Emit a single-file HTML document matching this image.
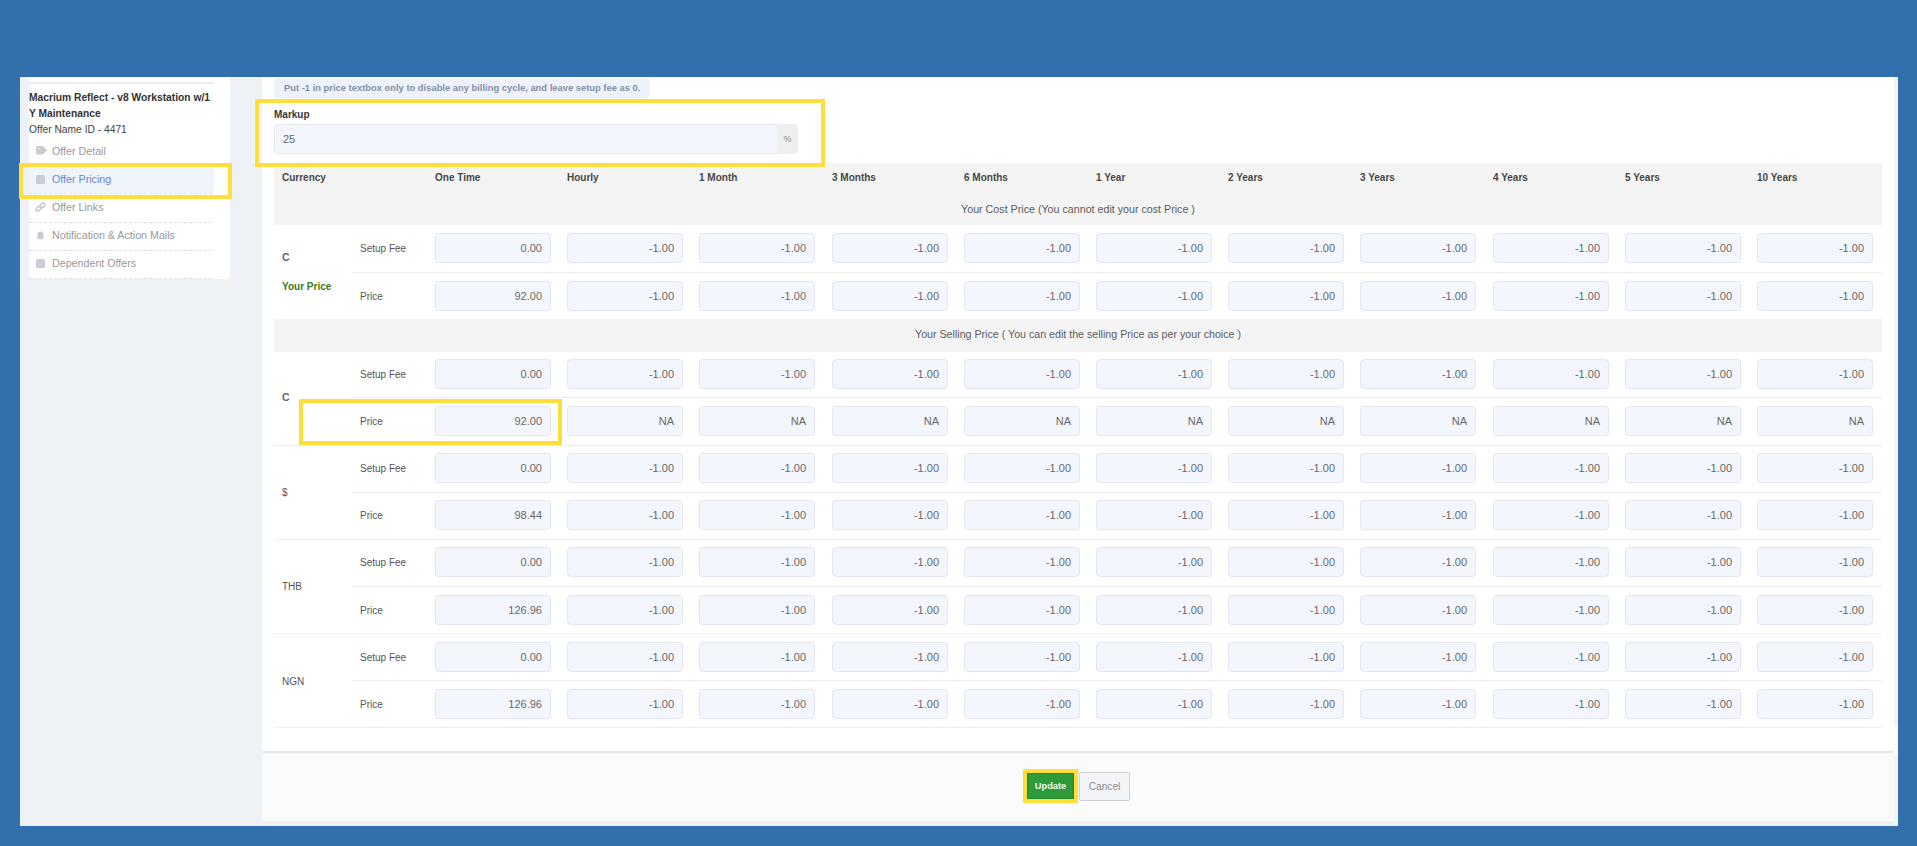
<!DOCTYPE html>
<html><head><meta charset="utf-8">
<style>
*{box-sizing:border-box;margin:0;padding:0}
html,body{width:1917px;height:846px;overflow:hidden;background:#3170ad;font-family:"Liberation Sans",sans-serif}
.abs{position:absolute}
#frame{position:absolute;left:20px;top:77px;width:1878px;height:749px;background:#eef1f6}
#card{position:absolute;left:29px;top:77px;width:201px;height:202px;background:#fff;border-radius:0 0 4px 4px}
#main{position:absolute;left:262px;top:77px;width:1632px;height:745px;background:#fff}
#footer{position:absolute;left:262px;top:751px;width:1632px;height:70px;background:#fbfbfb;border-top:2px solid #e5e5e5}
.th{position:absolute;font-size:10px;font-weight:bold;color:#474747;white-space:nowrap;line-height:12px}
.lab{position:absolute;font-size:10px;color:#555;white-space:nowrap;line-height:16px}
.cur{position:absolute;font-size:10px;color:#555;white-space:nowrap;line-height:16px}
.yp{position:absolute;font-size:10px;font-weight:bold;color:#3a7a1a;white-space:nowrap;line-height:16px}
.in{position:absolute;width:116px;height:30px;background:#f3f6fc;border:1px solid #e3e6f0;border-radius:4px;font-size:11px;color:#686868;text-align:right;padding-right:8px;line-height:29px;white-space:nowrap}
.ln{position:absolute;height:1px;background:#eeeeee}
.band{position:absolute;left:274px;width:1608px;background:#f4f4f4}
.bt{position:absolute;left:274px;width:1608px;text-align:center;font-size:10.7px;color:#5c5c5c;white-space:nowrap}
.ybox{position:absolute;border:4px solid #ffde3a}
.side{position:absolute;left:29px;width:185px;height:28px;font-size:10.7px;color:#999;line-height:28px;padding-left:23px;white-space:nowrap}
.dash{position:absolute;left:29px;width:185px;height:1px;background:repeating-linear-gradient(90deg,#e0e0e0 0 3px,transparent 3px 5px)}
</style></head><body>
<div id="frame"></div>
<div id="card"></div>
<div class="abs" style="left:29px;top:82px;width:185px;height:2px;background:#ededed"></div>
<div class="abs" style="left:29px;top:90px;width:190px;font-size:10.25px;font-weight:bold;color:#333;line-height:16px">Macrium Reflect - v8 Workstation w/1 Y Maintenance</div>
<div class="abs" style="left:29px;top:122px;font-size:10.25px;color:#444;line-height:16px;white-space:nowrap">Offer Name ID - 4471</div>
<div class="side" style="top:137px">Offer Detail</div>
<svg class="abs" style="left:35px;top:145px" width="13" height="11" viewBox="0 0 13 11"><path d="M1 2.5 Q1 1 2.5 1 L8 1 L12 5.2 L8 9.6 L2.5 9.6 Q1 9.6 1 8 Z" fill="#cbccd1"/><circle cx="3.4" cy="3.4" r="0.9" fill="#eee"/></svg>
<div class="side" style="top:165px;background:#f0f4fb;color:#6a84d6">Offer Pricing</div>
<div class="abs" style="left:36px;top:175px;width:9px;height:9px;background:#cbcdd8;border-radius:1.5px"></div>
<div class="dash" style="top:193px"></div>
<div class="side" style="top:193px">Offer Links</div>
<svg class="abs" style="left:35px;top:202px" width="11" height="11" viewBox="0 0 11 11"><g fill="none" stroke="#c8c9ce" stroke-width="1.6"><rect x="1" y="5" width="5" height="3.4" rx="1.7" transform="rotate(-45 3.5 6.7)"/><rect x="5" y="1.6" width="5" height="3.4" rx="1.7" transform="rotate(-45 7.5 3.3)"/></g></svg>
<div class="dash" style="top:222px"></div>
<div class="side" style="top:221px">Notification &amp; Action Mails</div>
<svg class="abs" style="left:36px;top:231px" width="9" height="10" viewBox="0 0 9 10"><path d="M4.5 0.5 C2.3 0.5 1.6 2.3 1.6 4 L1.6 6.3 L0.4 7.8 L8.6 7.8 L7.4 6.3 L7.4 4 C7.4 2.3 6.7 0.5 4.5 0.5 Z M3.2 8.4 Q4.5 10.2 5.8 8.4 Z" fill="#c8c9d0"/></svg>
<div class="dash" style="top:250px"></div>
<div class="side" style="top:249px">Dependent Offers</div>
<div class="abs" style="left:36px;top:259px;width:9px;height:9px;background:#cbcdd8;border-radius:1.5px"></div>
<div class="dash" style="top:278px"></div>

<div id="main"></div>
<div class="abs" style="left:274px;top:78px;width:376px;height:20px;background:#eef2fb;border-radius:3px"></div>
<div class="abs" style="left:284px;top:82px;font-size:9.4px;font-weight:bold;color:#8290a6;white-space:nowrap;line-height:12px">Put -1 in price textbox only to disable any billing cycle, and leave setup fee as 0.</div>
<div class="abs" style="left:274px;top:108px;font-size:10px;font-weight:bold;color:#383838;line-height:14px">Markup</div>
<div class="abs" style="left:274px;top:124px;width:524px;height:30px;background:#f3f6fc;border:1px solid #e5e8f1;border-radius:4px"></div>
<div class="abs" style="left:777px;top:124px;width:21px;height:30px;background:#efefef;border-radius:0 4px 4px 0;font-size:9px;color:#888;text-align:center;line-height:30px">%</div>
<div class="abs" style="left:283px;top:132px;font-size:11px;color:#666;line-height:14px">25</div>

<div class="band" style="top:163px;height:62px"></div>
<div class="bt" style="top:203px;line-height:13px">Your Cost Price (You cannot edit your cost Price )</div>
<div class="band" style="top:319px;height:33px"></div>
<div class="bt" style="top:328px;line-height:13px;font-size:10.66px">Your Selling Price ( You can edit the selling Price as per your choice )</div>
<div class="th" style="left:435px;top:172px">One Time</div>
<div class="th" style="left:567px;top:172px">Hourly</div>
<div class="th" style="left:699px;top:172px">1 Month</div>
<div class="th" style="left:832px;top:172px">3 Months</div>
<div class="th" style="left:964px;top:172px">6 Months</div>
<div class="th" style="left:1096px;top:172px">1 Year</div>
<div class="th" style="left:1228px;top:172px">2 Years</div>
<div class="th" style="left:1360px;top:172px">3 Years</div>
<div class="th" style="left:1493px;top:172px">4 Years</div>
<div class="th" style="left:1625px;top:172px">5 Years</div>
<div class="th" style="left:1757px;top:172px">10 Years</div>
<div class="th" style="left:282px;top:172px">Currency</div>
<div class="lab" style="left:360px;top:241px">Setup Fee</div>
<div class="in" style="left:435px;top:233px">0.00</div>
<div class="in" style="left:567px;top:233px">-1.00</div>
<div class="in" style="left:699px;top:233px">-1.00</div>
<div class="in" style="left:832px;top:233px">-1.00</div>
<div class="in" style="left:964px;top:233px">-1.00</div>
<div class="in" style="left:1096px;top:233px">-1.00</div>
<div class="in" style="left:1228px;top:233px">-1.00</div>
<div class="in" style="left:1360px;top:233px">-1.00</div>
<div class="in" style="left:1493px;top:233px">-1.00</div>
<div class="in" style="left:1625px;top:233px">-1.00</div>
<div class="in" style="left:1757px;top:233px">-1.00</div>
<div class="lab" style="left:360px;top:289px">Price</div>
<div class="in" style="left:435px;top:281px">92.00</div>
<div class="in" style="left:567px;top:281px">-1.00</div>
<div class="in" style="left:699px;top:281px">-1.00</div>
<div class="in" style="left:832px;top:281px">-1.00</div>
<div class="in" style="left:964px;top:281px">-1.00</div>
<div class="in" style="left:1096px;top:281px">-1.00</div>
<div class="in" style="left:1228px;top:281px">-1.00</div>
<div class="in" style="left:1360px;top:281px">-1.00</div>
<div class="in" style="left:1493px;top:281px">-1.00</div>
<div class="in" style="left:1625px;top:281px">-1.00</div>
<div class="in" style="left:1757px;top:281px">-1.00</div>
<div class="lab" style="left:360px;top:367px">Setup Fee</div>
<div class="in" style="left:435px;top:359px">0.00</div>
<div class="in" style="left:567px;top:359px">-1.00</div>
<div class="in" style="left:699px;top:359px">-1.00</div>
<div class="in" style="left:832px;top:359px">-1.00</div>
<div class="in" style="left:964px;top:359px">-1.00</div>
<div class="in" style="left:1096px;top:359px">-1.00</div>
<div class="in" style="left:1228px;top:359px">-1.00</div>
<div class="in" style="left:1360px;top:359px">-1.00</div>
<div class="in" style="left:1493px;top:359px">-1.00</div>
<div class="in" style="left:1625px;top:359px">-1.00</div>
<div class="in" style="left:1757px;top:359px">-1.00</div>
<div class="lab" style="left:360px;top:414px">Price</div>
<div class="in" style="left:435px;top:406px">92.00</div>
<div class="in" style="left:567px;top:406px">NA</div>
<div class="in" style="left:699px;top:406px">NA</div>
<div class="in" style="left:832px;top:406px">NA</div>
<div class="in" style="left:964px;top:406px">NA</div>
<div class="in" style="left:1096px;top:406px">NA</div>
<div class="in" style="left:1228px;top:406px">NA</div>
<div class="in" style="left:1360px;top:406px">NA</div>
<div class="in" style="left:1493px;top:406px">NA</div>
<div class="in" style="left:1625px;top:406px">NA</div>
<div class="in" style="left:1757px;top:406px">NA</div>
<div class="lab" style="left:360px;top:461px">Setup Fee</div>
<div class="in" style="left:435px;top:453px">0.00</div>
<div class="in" style="left:567px;top:453px">-1.00</div>
<div class="in" style="left:699px;top:453px">-1.00</div>
<div class="in" style="left:832px;top:453px">-1.00</div>
<div class="in" style="left:964px;top:453px">-1.00</div>
<div class="in" style="left:1096px;top:453px">-1.00</div>
<div class="in" style="left:1228px;top:453px">-1.00</div>
<div class="in" style="left:1360px;top:453px">-1.00</div>
<div class="in" style="left:1493px;top:453px">-1.00</div>
<div class="in" style="left:1625px;top:453px">-1.00</div>
<div class="in" style="left:1757px;top:453px">-1.00</div>
<div class="lab" style="left:360px;top:508px">Price</div>
<div class="in" style="left:435px;top:500px">98.44</div>
<div class="in" style="left:567px;top:500px">-1.00</div>
<div class="in" style="left:699px;top:500px">-1.00</div>
<div class="in" style="left:832px;top:500px">-1.00</div>
<div class="in" style="left:964px;top:500px">-1.00</div>
<div class="in" style="left:1096px;top:500px">-1.00</div>
<div class="in" style="left:1228px;top:500px">-1.00</div>
<div class="in" style="left:1360px;top:500px">-1.00</div>
<div class="in" style="left:1493px;top:500px">-1.00</div>
<div class="in" style="left:1625px;top:500px">-1.00</div>
<div class="in" style="left:1757px;top:500px">-1.00</div>
<div class="lab" style="left:360px;top:555px">Setup Fee</div>
<div class="in" style="left:435px;top:547px">0.00</div>
<div class="in" style="left:567px;top:547px">-1.00</div>
<div class="in" style="left:699px;top:547px">-1.00</div>
<div class="in" style="left:832px;top:547px">-1.00</div>
<div class="in" style="left:964px;top:547px">-1.00</div>
<div class="in" style="left:1096px;top:547px">-1.00</div>
<div class="in" style="left:1228px;top:547px">-1.00</div>
<div class="in" style="left:1360px;top:547px">-1.00</div>
<div class="in" style="left:1493px;top:547px">-1.00</div>
<div class="in" style="left:1625px;top:547px">-1.00</div>
<div class="in" style="left:1757px;top:547px">-1.00</div>
<div class="lab" style="left:360px;top:603px">Price</div>
<div class="in" style="left:435px;top:595px">126.96</div>
<div class="in" style="left:567px;top:595px">-1.00</div>
<div class="in" style="left:699px;top:595px">-1.00</div>
<div class="in" style="left:832px;top:595px">-1.00</div>
<div class="in" style="left:964px;top:595px">-1.00</div>
<div class="in" style="left:1096px;top:595px">-1.00</div>
<div class="in" style="left:1228px;top:595px">-1.00</div>
<div class="in" style="left:1360px;top:595px">-1.00</div>
<div class="in" style="left:1493px;top:595px">-1.00</div>
<div class="in" style="left:1625px;top:595px">-1.00</div>
<div class="in" style="left:1757px;top:595px">-1.00</div>
<div class="lab" style="left:360px;top:650px">Setup Fee</div>
<div class="in" style="left:435px;top:642px">0.00</div>
<div class="in" style="left:567px;top:642px">-1.00</div>
<div class="in" style="left:699px;top:642px">-1.00</div>
<div class="in" style="left:832px;top:642px">-1.00</div>
<div class="in" style="left:964px;top:642px">-1.00</div>
<div class="in" style="left:1096px;top:642px">-1.00</div>
<div class="in" style="left:1228px;top:642px">-1.00</div>
<div class="in" style="left:1360px;top:642px">-1.00</div>
<div class="in" style="left:1493px;top:642px">-1.00</div>
<div class="in" style="left:1625px;top:642px">-1.00</div>
<div class="in" style="left:1757px;top:642px">-1.00</div>
<div class="lab" style="left:360px;top:697px">Price</div>
<div class="in" style="left:435px;top:689px">126.96</div>
<div class="in" style="left:567px;top:689px">-1.00</div>
<div class="in" style="left:699px;top:689px">-1.00</div>
<div class="in" style="left:832px;top:689px">-1.00</div>
<div class="in" style="left:964px;top:689px">-1.00</div>
<div class="in" style="left:1096px;top:689px">-1.00</div>
<div class="in" style="left:1228px;top:689px">-1.00</div>
<div class="in" style="left:1360px;top:689px">-1.00</div>
<div class="in" style="left:1493px;top:689px">-1.00</div>
<div class="in" style="left:1625px;top:689px">-1.00</div>
<div class="in" style="left:1757px;top:689px">-1.00</div>
<div class="ln" style="left:352px;top:272px;width:1530px"></div>
<div class="ln" style="left:352px;top:397px;width:1530px"></div>
<div class="ln" style="left:274px;top:445px;width:1608px"></div>
<div class="ln" style="left:352px;top:492px;width:1530px"></div>
<div class="ln" style="left:274px;top:539px;width:1608px"></div>
<div class="ln" style="left:352px;top:586px;width:1530px"></div>
<div class="ln" style="left:274px;top:633px;width:1608px"></div>
<div class="ln" style="left:352px;top:680px;width:1530px"></div>
<div class="ln" style="left:274px;top:727px;width:1608px"></div>
<div class="cur" style="left:282px;top:249px;font-weight:bold;font-size:10.5px;color:#666">C</div>
<div class="cur" style="left:282px;top:389px;font-weight:bold;font-size:10.5px;color:#666">C</div>
<div class="cur" style="left:282px;top:485px">$</div>
<div class="cur" style="left:282px;top:579px">THB</div>
<div class="cur" style="left:282px;top:674px">NGN</div>
<div class="yp" style="left:282px;top:279px">Your Price</div>

<div id="footer"></div>
<div class="abs" style="left:1894px;top:77px;width:4px;height:749px;background:#f3f4f6"></div>
<div class="abs" style="left:1894px;top:725px;width:4px;height:31px;background:#fff"></div>
<div class="abs" style="left:262px;top:821px;width:1632px;height:5px;background:#eff0f3"></div>
<div class="abs" style="left:1027px;top:773px;width:47px;height:26px;background:#2e9b3b;border:1px solid #1b8a2b;color:#eef7e6;font-size:9.3px;font-weight:bold;text-align:center;line-height:24px">Update</div>
<div class="abs" style="left:1079px;top:772px;width:51px;height:29px;background:#f3f4f7;border:1px solid #cfcfcf;border-radius:2px;color:#8a8a96;font-size:10.2px;text-align:center;line-height:27px">Cancel</div>

<div class="ybox" style="left:255px;top:99px;width:570px;height:68px"></div>
<div class="ybox" style="left:19px;top:163px;width:213px;height:36px"></div>
<div class="ybox" style="left:299px;top:399px;width:263px;height:46px"></div>
<div class="ybox" style="left:1023px;top:769px;width:55px;height:34px"></div>
</body></html>
